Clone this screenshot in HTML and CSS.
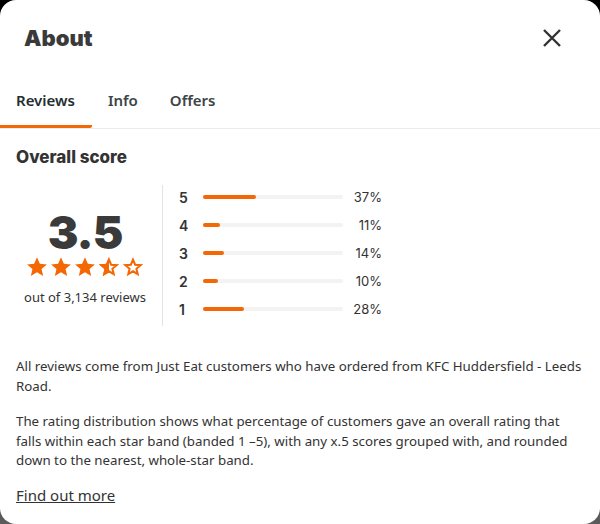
FILE: index.html
```html
<!DOCTYPE html>
<html lang="en">
<head>
<meta charset="utf-8">
<title>About</title>
<link rel="stylesheet" href="styles.css">
</head>
<body>
<div class="modal">
  <header class="header">
    <h1 class="title">About</h1>
    <button class="close" aria-label="Close">
      <svg width="20" height="20" viewBox="0 0 20 20"><path d="M2 2L18 18M18 2L2 18" stroke="#333" stroke-width="2.4" fill="none"/></svg>
    </button>
  </header>
  <nav class="tabs">
    <div class="tab active">Reviews</div>
    <div class="tab">Info</div>
    <div class="tab">Offers</div>
  </nav>
  <section class="content">
    <h2 class="section-title">Overall score</h2>
    <div class="score">
      <div class="summary">
        <div class="rating">3.5</div>
        <div class="stars">
          <svg width="20" height="20" viewBox="1.2 1.2 21.6 21.6"><path class="full" d="M12 1.5l3.1 7.1 7.6.6-5.8 5 1.8 7.5L12 17.7l-6.7 4 1.8-7.5-5.8-5 7.6-.6z"/></svg>
          <svg width="20" height="20" viewBox="1.2 1.2 21.6 21.6"><path class="full" d="M12 1.5l3.1 7.1 7.6.6-5.8 5 1.8 7.5L12 17.7l-6.7 4 1.8-7.5-5.8-5 7.6-.6z"/></svg>
          <svg width="20" height="20" viewBox="1.2 1.2 21.6 21.6"><path class="full" d="M12 1.5l3.1 7.1 7.6.6-5.8 5 1.8 7.5L12 17.7l-6.7 4 1.8-7.5-5.8-5 7.6-.6z"/></svg>
          <svg width="20" height="20" viewBox="1.2 1.2 21.6 21.6"><path class="full" d="M12 1.5L12 17.7l-6.7 4 1.8-7.5-5.8-5 7.6-.6z"/><path class="outline" d="M12 4.1l2.3 5.4 5.9.5-4.5 3.9 1.4 5.8L12 16.6l-5.1 3.1 1.4-5.8-4.5-3.9 5.9-.5z"/></svg>
          <svg width="20" height="20" viewBox="1.2 1.2 21.6 21.6"><path class="outline" d="M12 4.1l2.3 5.4 5.9.5-4.5 3.9 1.4 5.8L12 16.6l-5.1 3.1 1.4-5.8-4.5-3.9 5.9-.5z"/></svg>
        </div>
        <div class="count">out of 3,134 reviews</div>
      </div>
      <div class="bars">
        <div class="row"><span class="num">5</span><span class="track"><span class="fill" style="width:38%"></span></span><span class="pct">37%</span></div>
        <div class="row"><span class="num">4</span><span class="track"><span class="fill" style="width:12%"></span></span><span class="pct">11%</span></div>
        <div class="row"><span class="num">3</span><span class="track"><span class="fill" style="width:15%"></span></span><span class="pct">14%</span></div>
        <div class="row"><span class="num">2</span><span class="track"><span class="fill" style="width:11%"></span></span><span class="pct">10%</span></div>
        <div class="row"><span class="num">1</span><span class="track"><span class="fill" style="width:29%"></span></span><span class="pct">28%</span></div>
      </div>
    </div>
    <p class="text">All reviews come from Just Eat customers who have ordered from KFC Huddersfield - Leeds Road.</p>
    <p class="text">The rating distribution shows what percentage of customers gave an overall rating that falls within each star band (banded 1 –5), with any x.5 scores grouped with, and rounded down to the nearest, whole-star band.</p>
    <a class="link" href="#">Find out more</a>
  </section>
</div>
</body>
</html>
```
FILE: styles.css
```css
* { box-sizing: border-box; }
html, body { margin: 0; padding: 0; }
body {
  width: 600px;
  height: 524px;
  background: linear-gradient(#000 0%, #000 50%, #5c5c5c 100%);
  font-family: "Noto Sans", "Liberation Sans", sans-serif;
  color: #333;
  overflow: hidden;
}
.modal {
  width: 600px;
  height: 524px;
  background: #fff;
  border-radius: 16px;
  overflow: hidden;
}
.header {
  height: 75px;
  display: flex;
  align-items: center;
  justify-content: space-between;
  padding: 0 38px 0 24px;
}
.title {
  margin: 0;
  font-family: Inter, "Noto Sans", sans-serif;
  font-weight: 900;
  font-size: 22px;
  color: #3a3a3a;
  letter-spacing: 0;
}
.close {
  border: 0;
  background: none;
  padding: 0;
  width: 20px;
  height: 20px;
  display: flex;
}
.tabs {
  display: flex;
  height: 54px;
  border-bottom: 1px solid #ebebeb;
}
.tab {
  height: 53px;
  display: flex;
  align-items: center;
  padding: 0 16px;
  font-family: "Noto Sans", sans-serif;
  font-weight: 600;
  font-size: 15px;
  color: #3b4547;
  border-bottom: 3px solid transparent;
}
.tab.active {
  color: #242e30;
  border-bottom-color: #f36805;
  border-radius: 0 2px 2px 0;
  padding-right: 17px;
}
.content {
  padding: 0 16px;
}
.section-title {
  margin: 17px 0 0;
  font-family: Inter, sans-serif;
  font-weight: 800;
  font-size: 17px;
  color: #333;
  line-height: 22px;
}
.score {
  display: flex;
  margin-top: 17px;
  height: 141px;
}
.summary {
  width: 147px;
  border-right: 1px solid #e4e4e4;
  display: flex;
  flex-direction: column;
  align-items: center;
  padding-top: 23px;
  padding-right: 8px;
}
.rating {
  font-family: Inter, sans-serif;
  font-weight: 900;
  font-size: 46px;
  line-height: 48px;
  color: #3a3a3a;
  letter-spacing: -1px;
}
.stars {
  display: flex;
  gap: 4px;
  margin-top: 1px;
}
.stars .full { fill: #f36805; }
.stars .outline { fill: none; stroke: #f36805; stroke-width: 2.2; stroke-linejoin: miter; }
.count {
  margin-top: 11px;
  font-size: 13px;
  color: #333;
}
.bars {
  display: flex;
  flex-direction: column;
  padding-left: 16px;
  margin-top: -2px;
}
.row {
  display: flex;
  align-items: center;
  height: 28px;
}
.num {
  width: 24px;
  font-family: Inter, sans-serif;
  font-weight: 600;
  font-size: 14px;
  color: #333;
}
.track {
  width: 140px;
  height: 4px;
  border-radius: 2px;
  background: #f5f3f1;
  display: flex;
}
.fill {
  background: #f36805;
  border-radius: 2px;
  height: 4px;
}
.pct {
  width: 39px;
  text-align: right;
  font-family: Inter, sans-serif;
  font-size: 13px;
  color: #333;
}
.text {
  margin: 31px 0 0;
  font-size: 13.3px;
  line-height: 19.6px;
  color: #333;
}
.text + .text { margin-top: 16px; }
.link {
  display: inline-block;
  margin-top: 14px;
  font-size: 15px;
  color: #333;
  text-decoration: underline;
}
```
